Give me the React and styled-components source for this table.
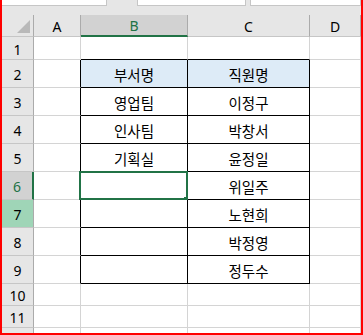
import React from 'react';
import styled, { createGlobalStyle } from 'styled-components';

const GREEN = '#217346';
const GRID = '#d4d4d4';
const INK = '#000';

const GlobalStyle = createGlobalStyle`
  body {
    margin: 0;
    background: #fff;
  }
`;

const Frame = styled.div`
  width: 363px;
  height: 335px;
  box-sizing: border-box;
  border: 2px solid #ff0000;
  border-top: none;
  overflow: hidden;
  background: #e6e6e6;
`;

const TopStrip = styled.div`
  display: flex;
  height: 15px;
  align-items: flex-start;
`;

const Field = styled.div`
  height: 6px;
  width: ${p => p.$w};
  margin-left: ${p => p.$gap || '0px'};
  box-sizing: border-box;
  background: #fff;
  border: 1px solid #c6c6c6;
  border-top: none;
  border-left-width: ${p => (p.$noLeft ? '0' : '1px')};
  flex: ${p => (p.$grow ? '1' : 'none')};
`;

const Sheet = styled.div`
  display: grid;
  grid-template-columns: 32px 47px 107px 122px 1fr;
  grid-template-rows: 22px 23px repeat(8, 28px) repeat(3, 22px);
  background: #fff;
`;

const ColHead = styled.div`
  box-sizing: border-box;
  display: flex;
  align-items: center;
  justify-content: center;
  background: ${p => (p.$active ? '#d2d2d2' : '#e6e6e6')};
  color: ${p => (p.$active ? GREEN : INK)};
  border-right: 1px solid #ababab;
  border-bottom: ${p => (p.$active ? `2px solid ${GREEN}` : '1px solid #c6c6c6')};
  font-family: 'Noto Sans', 'Liberation Sans', sans-serif;
  font-size: 14px;
  padding-top: 1px;
`;

const Corner = styled(ColHead)`
  align-items: flex-end;
  justify-content: flex-end;
  padding: 0 3px 3px 0;
`;

const RowHead = styled.div`
  box-sizing: border-box;
  display: flex;
  align-items: center;
  justify-content: center;
  background: ${p => p.$bg};
  color: ${p => p.$color};
  border-right: ${p => (p.$active ? `2px solid ${GREEN}` : '1px solid #ababab')};
  border-bottom: 1px solid #c6c6c6;
  font-family: 'Noto Sans', 'Liberation Sans', sans-serif;
  font-size: 14px;
  padding-top: 2px;
`;

const Cell = styled.div`
  position: relative;
  box-sizing: border-box;
  display: flex;
  align-items: center;
  justify-content: center;
  background: ${p => p.$fill || '#fff'};
  border-right: 1px solid ${p => p.$right};
  border-bottom: 1px solid ${p => p.$bottom};
  font-family: 'Noto Sans CJK KR', 'Noto Sans', sans-serif;
  font-size: 14.5px;
  color: ${INK};
  padding-top: 2px;
`;

const Selection = styled.span`
  position: absolute;
  top: -1px;
  left: -2px;
  right: -1px;
  bottom: -1px;
  border: 2px solid ${GREEN};
  pointer-events: none;
`;

const FillHandle = styled.span`
  position: absolute;
  right: -3px;
  bottom: -4px;
  width: 6px;
  height: 6px;
  background: ${GREEN};
`;

const columns = ['A', 'B', 'C', 'D'];

const rows = [
  { n: 1 },
  { n: 2, b: '부서명', c: '직원명', head: true },
  { n: 3, b: '영업팀', c: '이정구' },
  { n: 4, b: '인사팀', c: '박창서' },
  { n: 5, b: '기획실', c: '윤정일' },
  { n: 6, c: '위일주' },
  { n: 7, c: '노현희' },
  { n: 8, c: '박정영' },
  { n: 9, c: '정두수' },
  { n: 10 },
  { n: 11 },
  { n: 12 },
];

const SELECTED_ROW = 6;

// rows 2..9 of columns B and C carry a black outline
const inTable = n => n >= 2 && n <= 9;

function rowHeadStyle(n) {
  if (n === SELECTED_ROW) return { bg: '#d2d2d2', color: GREEN, active: true };
  if (n === 7) return { bg: '#9fd5b7', color: INK };
  return { bg: '#e6e6e6', color: INK };
}

const SelectAll = () => (
  <svg width="13" height="13" viewBox="0 0 13 13">
    <polygon points="13,0 13,13 0,13" fill="#b9b9b9" />
  </svg>
);

export default function App() {
  return (
    <>
      <GlobalStyle />
      <Frame>
        <TopStrip>
          <Field $w="105px" $noLeft />
          <Field $w="109px" $gap="30px" />
          <Field $gap="4px" $grow />
        </TopStrip>
        <Sheet>
          <Corner>
            <SelectAll />
          </Corner>
          {columns.map(col => (
            <ColHead key={col} $active={col === 'B'}>
              {col}
            </ColHead>
          ))}

          {rows.map(row => {
            const head = rowHeadStyle(row.n);
            const boxed = inTable(row.n);
            const topEdge = row.n === 1;
            const fill = row.head ? '#ddebf7' : undefined;
            return (
              <React.Fragment key={row.n}>
                <RowHead $bg={head.bg} $color={head.color} $active={head.active}>
                  {row.n}
                </RowHead>
                <Cell $right={boxed ? INK : GRID} $bottom={GRID} />
                <Cell
                  $right={boxed ? INK : GRID}
                  $bottom={boxed || topEdge ? INK : GRID}
                  $fill={fill}
                >
                  {row.b}
                  {row.n === SELECTED_ROW && (
                    <>
                      <Selection />
                      <FillHandle />
                    </>
                  )}
                </Cell>
                <Cell
                  $right={boxed ? INK : GRID}
                  $bottom={boxed || topEdge ? INK : GRID}
                  $fill={fill}
                >
                  {row.c}
                </Cell>
                <Cell $right={GRID} $bottom={GRID} />
              </React.Fragment>
            );
          })}
        </Sheet>
      </Frame>
    </>
  );
}
